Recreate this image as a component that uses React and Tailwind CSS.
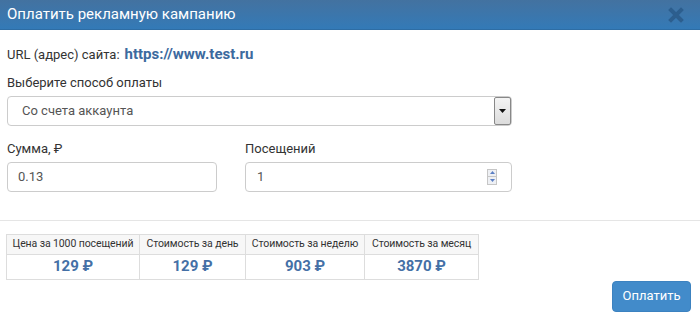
const stats = [
  { label: 'Цена за 1000 посещений', value: '129 ₽', w: 'w-[133px]' },
  { label: 'Стоимость за день', value: '129 ₽', w: 'w-[106px]' },
  { label: 'Стоимость за неделю', value: '903 ₽', w: 'w-[119px]' },
  { label: 'Стоимость за месяц', value: '3870 ₽', w: 'w-[114px]' },
];

const App = () => {
  return (
    <div className="w-[700px] h-[322px] bg-white text-[#333] font-['Roboto',sans-serif] overflow-hidden">
      {/* Header */}
      <div className="h-[30px] bg-gradient-to-b from-[#4372a0] to-[#337ab7] border-b border-[#2e6da4] flex items-center justify-between pl-[7px] pr-[16px]">
        <span className="text-white text-[15px] leading-none">Оплатить рекламную кампанию</span>
        <svg width="16" height="16" viewBox="0 0 16 16">
          <path d="M3 3 L13 13 M13 3 L3 13" stroke="#2c5e8e" strokeWidth="4" strokeLinecap="square" />
        </svg>
      </div>

      <div className="px-[7px]">
        {/* URL */}
        <div className="mt-[13px] flex items-baseline gap-[5px]">
          <span className="text-[13px]">URL (адрес) сайта:</span>
          <span className="text-[15px] font-bold text-[#3c6a9e]">https://www.test.ru</span>
        </div>

        {/* Payment method */}
        <div className="mt-[8px] text-[13px] leading-[18px]">Выберите способ оплаты</div>
        <div className="mt-[4px] w-[505px] h-[30px] border border-[#ccc] rounded-[4px] flex items-center justify-between">
          <span className="pl-[14px] text-[13px] text-[#555]">Со счета аккаунта</span>
          <div className="w-[17px] h-[28px] border border-[#888] rounded-[2px] bg-gradient-to-b from-[#f4f4f4] to-[#dcdcdc] flex items-center justify-center">
            <svg width="7" height="4" viewBox="0 0 7 4"><path d="M0 0 H7 L3.5 4 Z" fill="#111" /></svg>
          </div>
        </div>

        {/* Amount & visits */}
        <div className="mt-[14px] flex gap-[28px]">
          <div className="w-[210px]">
            <div className="text-[13px] leading-[18px]">Сумма, ₽</div>
            <div className="mt-[4px] h-[30px] border border-[#ccc] rounded-[4px] flex items-center pl-[10px] text-[13px] text-[#555]">0.13</div>
          </div>
          <div className="w-[267px]">
            <div className="text-[13px] leading-[18px]">Посещений</div>
            <div className="mt-[4px] h-[30px] border border-[#ccc] rounded-[4px] flex items-center justify-between pl-[11px] pr-[14px] text-[13px] text-[#555]">
              <span>1</span>
              <div className="flex flex-col w-[10px] border border-[#c6c6c6]">
                <div className="h-[7px] bg-[#eef0f4] flex items-center justify-center border-b border-[#c6c6c6]">
                  <svg width="5" height="3" viewBox="0 0 5 3"><path d="M0 3 H5 L2.5 0 Z" fill="#5b7fc4" /></svg>
                </div>
                <div className="h-[7px] bg-[#eef0f4] flex items-center justify-center">
                  <svg width="5" height="3" viewBox="0 0 5 3"><path d="M0 0 H5 L2.5 3 Z" fill="#5b7fc4" /></svg>
                </div>
              </div>
            </div>
          </div>
        </div>
      </div>

      {/* Divider */}
      <div className="mt-[28px] border-t border-[#e5e5e5]" />

      {/* Stats table */}
      <div className="mt-[13px] ml-[6px] flex items-end justify-between pr-[9px]">
        <table className="border-collapse table-fixed text-[10.5px] tracking-[-0.1px]">
          <thead>
            <tr>
              {stats.map((s) => (
                <th key={s.label} className={`${s.w} h-[20px] border border-[#ddd] bg-[#f7f7f7] font-normal text-[#333] px-[2px] whitespace-nowrap`}>
                  {s.label}
                </th>
              ))}
            </tr>
          </thead>
          <tbody>
            <tr>
              {stats.map((s) => (
                <td key={s.label} className="h-[25px] border border-[#ddd] text-center text-[15px] tracking-normal font-bold text-[#4470a6]">
                  {s.value}
                </td>
              ))}
            </tr>
          </tbody>
        </table>
        <button className="mb-[-32px] w-[79px] h-[31px] rounded-[4px] bg-[#428bca] border border-[#3c82c0] text-white text-[13px]">
          Оплатить
        </button>
      </div>
    </div>
  );
};

export default App;
